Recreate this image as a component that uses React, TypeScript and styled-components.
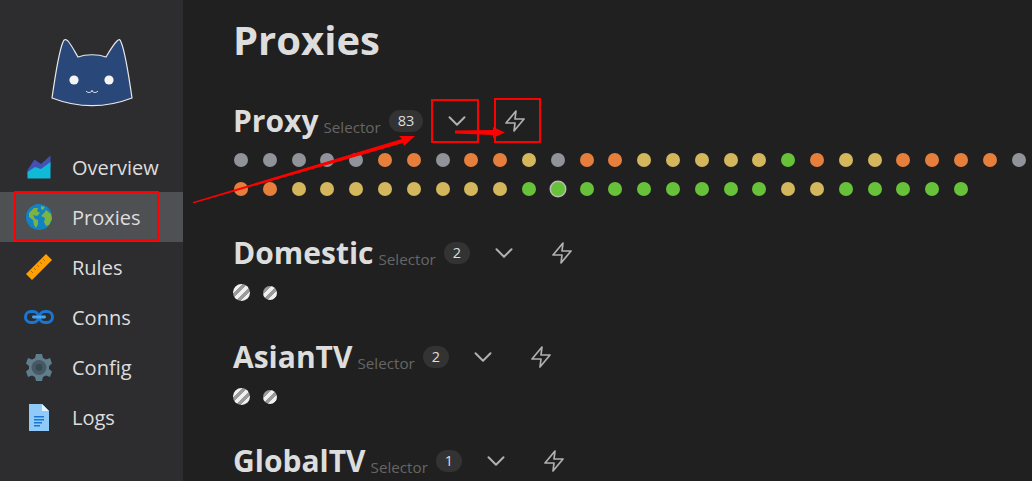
import React from "react";
import styled, { createGlobalStyle } from "styled-components";

const GlobalStyle = createGlobalStyle`
  html, body {
    margin: 0;
    padding: 0;
    height: 100%;
    overflow: hidden;
    background: #202020;
    font-family: "Open Sans", "Noto Sans", sans-serif;
  }
  #root {
    height: 100%;
  }
`;

const COLORS: Record<string, string> = {
  n: "#909399",
  o: "#e67f3c",
  y: "#d4b75c",
  g: "#67c23a"
};

// one letter per proxy, n = no latency yet
const proxyDots = ("nnnnnoonooynooyyyyygoyyoooon" + "ooyyyyyyyyggggggggg" + "yyggggg").split("");
const SELECTED_DOT = 39;

const navItems = [
  { name: "Overview", icon: <OverviewIcon /> },
  { name: "Proxies", icon: <GlobeIcon />, active: true },
  { name: "Rules", icon: <RulerIcon /> },
  { name: "Conns", icon: <LinkIcon /> },
  { name: "Config", icon: <GearIcon /> },
  { name: "Logs", icon: <DocIcon /> }
];

const groups = [
  { name: "Domestic", count: 2 },
  { name: "AsianTV", count: 2 },
  { name: "GlobalTV", count: 1 }
];

export default function App() {
  return (
    <Page>
      <GlobalStyle />
      <Sidebar>
        <LogoWrap>
          <CatLogo />
        </LogoWrap>
        <Nav>
          {navItems.map(({ name, icon, active }) => (
            <NavItem key={name} $active={active}>
              <NavIcon>{icon}</NavIcon>
              <span>{name}</span>
            </NavItem>
          ))}
        </Nav>
      </Sidebar>
      <Main>
        <Title>Proxies</Title>
        <Group>
          <GroupHeader name="Proxy" count={83} />
          <Dots>
            {proxyDots.map((tone, index) => (
              <Dot key={index} $color={COLORS[tone]} $selected={index === SELECTED_DOT} />
            ))}
          </Dots>
        </Group>
        {groups.map(({ name, count }) => (
          <Group key={name}>
            <GroupHeader name={name} count={count} />
            <Dots>
              <Striped $selected />
              <Striped />
            </Dots>
          </Group>
        ))}
      </Main>
      <Marks />
    </Page>
  );
}

function GroupHeader({ name, count }: { name: string; count: number }) {
  return (
    <Header>
      <GroupName>{name}</GroupName>
      <GroupType>Selector</GroupType>
      <Count>{count}</Count>
      <IconButton>
        <svg width="30" height="30" viewBox="0 0 24 24" fill="none" stroke="currentColor" strokeWidth="1.6" strokeLinecap="round" strokeLinejoin="round">
          <polyline points="6 9 12 15 18 9" />
        </svg>
      </IconButton>
      <IconButton>
        <svg width="24" height="24" viewBox="0 0 24 24" fill="none" stroke="currentColor" strokeWidth="1.7" strokeLinecap="round" strokeLinejoin="round">
          <polygon points="13 2 3 14 12 14 11 22 21 10 12 10 13 2" />
        </svg>
      </IconButton>
    </Header>
  );
}

function CatLogo() {
  return (
    <svg width="84" height="72" viewBox="0 0 84 72">
      <path
        d="M2 61 C5 40 9 14 13 5 C14 2 16 2 18 4 C22 9 25 15 28 20 C36 17 48 17 56 20 C59 15 63 8 67 4 C69 2 70 2 71 5 C75 14 79 40 82 61 C56 71 28 71 2 61 Z"
        fill="#2a477a"
        stroke="#e8e8e8"
        strokeWidth="1.2"
      />
      <circle cx="24" cy="43" r="4.6" fill="#f4f4f4" />
      <circle cx="59" cy="43" r="4.6" fill="#f4f4f4" />
      <path d="M36 54 C38 56 40 56 42 54 C44 56 46 56 48 54 M42 54 L42 53" fill="none" stroke="#f4f4f4" strokeWidth="1" />
    </svg>
  );
}

function OverviewIcon() {
  return (
    <svg width="24" height="24" viewBox="0 0 24 24">
      <path d="M0.5 15 L7.5 4.5 L14 9 L23.5 0.5 V12 L14 18 L0.5 20 Z" fill="#4351b5" />
      <path d="M0.5 17 L8 12 L14 14 L23.5 7 V23.5 H0.5 Z" fill="#0fbad6" />
    </svg>
  );
}

function GlobeIcon() {
  return (
    <svg width="26" height="26" viewBox="0 0 26 26">
      <circle cx="13" cy="13" r="13" fill="#1282c0" />
      <path d="M3 9 L8 4 L12 4 L11 7 L14 9 L11 12 L7 11 L9 15 L12 16 L12 20 L10 24 L8 21 L7 16 L3 13 Z" fill="#7cb342" />
      <path d="M15 2 L19 3 L17 6 L15 5 Z M20 6 L25 10 L26 15 L23 21 L20 22 L18 18 L19 14 L15 12 L18 9 Z" fill="#7cb342" />
    </svg>
  );
}

function RulerIcon() {
  return (
    <svg width="26" height="26" viewBox="0 0 26 26">
      <path d="M0 20 L20 0 L26 6 L6 26 Z" fill="#ff9f00" />
      <path d="M5 17 L7 19 M8 14 L10 16 M11 11 L13 13 M14 8 L16 10 M17 5 L19 7" stroke="#b26f00" strokeWidth="1" />
    </svg>
  );
}

function LinkIcon() {
  return (
    <svg width="30" height="14" viewBox="0 0 30 14">
      <rect x="1.5" y="1.5" width="13" height="11" rx="5.5" fill="none" stroke="#1976d2" strokeWidth="3" />
      <rect x="15.5" y="1.5" width="13" height="11" rx="5.5" fill="none" stroke="#1976d2" strokeWidth="3" />
      <rect x="8" y="5.6" width="14" height="2.8" rx="1.4" fill="#42a5f5" />
    </svg>
  );
}

function GearIcon() {
  return (
    <svg width="26" height="27" viewBox="0 0 26 27">
      <path
        d="M10 0 H16 L17 4 L20 5.5 L24 4 L26 9.5 L23 12 V15 L26 17.5 L24 23 L20 21.5 L17 23 L16 27 H10 L9 23 L6 21.5 L2 23 L0 17.5 L3 15 V12 L0 9.5 L2 4 L6 5.5 L9 4 Z"
        fill="#607d8b"
      />
      <circle cx="13" cy="13.5" r="7.5" fill="#455a64" />
      <circle cx="13" cy="13.5" r="3.4" fill="#37474f" />
    </svg>
  );
}

function DocIcon() {
  return (
    <svg width="20" height="27" viewBox="0 0 20 27">
      <path d="M0 0 H13 L20 7 V27 H0 Z" fill="#90caf9" />
      <path d="M13 0 L20 7 H13 Z" fill="#e1f5fe" />
      <path d="M5 12 H15 V13.5 H5 Z M5 15 H15 V16.5 H5 Z M5 18 H13 V19.5 H5 Z M5 21 H11 V22.5 H5 Z" fill="#1976d2" />
    </svg>
  );
}

// the red annotations drawn on top of the screenshot
function Marks() {
  return (
    <>
      <MarkBox $left={14} $top={191} $width={145} $height={50} />
      <MarkBox $left={431} $top={99} $width={48} $height={44} />
      <MarkBox $left={494} $top={98} $width={47} $height={45} />
      <MarkArrows width="1032" height="481" viewBox="0 0 1032 481">
        <path d="M193 202 L402 139 L399 136 L415 136 L404 146 L403 143 L193 203.5 Z" fill="#f00" />
        <path d="M455 130.5 L493 130 L493 127 L505 132.5 L493 138 L493 135 L455 133.5 Z" fill="#f00" />
      </MarkArrows>
    </>
  );
}

const Page = styled.div`
  display: flex;
  height: 100%;
  overflow: hidden;
  position: relative;
  background: #202020;
`;

const Sidebar = styled.div`
  width: 183px;
  flex-shrink: 0;
  background: #2d2d30;
`;

const LogoWrap = styled.div`
  display: flex;
  justify-content: center;
  padding: 37px 0 34px;
  height: 71px;
`;

const Nav = styled.nav`
  display: flex;
  flex-direction: column;
`;

const NavItem = styled.div<{ $active?: boolean }>`
  display: flex;
  align-items: center;
  height: 50px;
  padding-left: 24px;
  font-size: 20px;
  color: #ddd;
  background: ${props => (props.$active ? "#4f5054" : "transparent")};
`;

const NavIcon = styled.div`
  width: 30px;
  height: 30px;
  margin-right: 18px;
  display: flex;
  align-items: center;
  justify-content: center;
`;

const Main = styled.main`
  flex: 1;
  padding: 10px 0 0 51px;
  min-width: 0;
`;

const Title = styled.h1`
  margin: 0 0 33px -1px;
  font-size: 40px;
  line-height: 60px;
  font-weight: 700;
  color: #ddd;
`;

const Group = styled.section`
  margin-bottom: 39px;
`;

const Header = styled.div`
  display: flex;
  align-items: center;
  height: 36px;
`;

const GroupName = styled.h2`
  margin: 0 0 0 -1px;
  font-size: 30px;
  line-height: 36px;
  font-weight: 700;
  color: #ddd;
`;

const GroupType = styled.span`
  margin: 12px 8px 0 5px;
  font-size: 15.2px;
  color: #666;
`;

const Count = styled.span`
  height: 22px;
  padding: 0 9px;
  border-radius: 11px;
  background: #333;
  color: #ddd;
  font-size: 14.5px;
  line-height: 22px;
  text-align: center;
`;

const IconButton = styled.button`
  display: flex;
  align-items: center;
  justify-content: center;
  width: 40px;
  height: 30px;
  padding: 0;
  margin-left: 14px;
  margin-right: 4px;
  background: none;
  border: 0;
  color: #b0b0b0;
`;

const Dots = styled.div`
  display: flex;
  flex-wrap: wrap;
  align-items: center;
  width: 800px;
  margin-top: 14px;
  gap: 15px 14.8px;
`;

const Dot = styled.span<{ $color: string; $selected?: boolean }>`
  width: 14px;
  height: 14px;
  border-radius: 50%;
  background: ${props => props.$color};
  box-shadow: ${props => (props.$selected ? "0 0 0 1.5px #bbb" : "none")};
`;

const Striped = styled.span<{ $selected?: boolean }>`
  width: ${props => (props.$selected ? 17 : 14)}px;
  height: ${props => (props.$selected ? 17 : 14)}px;
  margin: ${props => (props.$selected ? -1 : 0)}px;
  margin-left: ${props => (props.$selected ? -1.5 : 0)}px;
  border-radius: 50%;
  background: repeating-linear-gradient(
    -45deg,
    #9a9a9a 0,
    #9a9a9a 3.5px,
    #f0f0f0 3.5px,
    #f0f0f0 7px
  );
`;

const MarkBox = styled.div<{ $left: number; $top: number; $width: number; $height: number }>`
  position: absolute;
  left: ${props => props.$left}px;
  top: ${props => props.$top}px;
  width: ${props => props.$width}px;
  height: ${props => props.$height}px;
  box-sizing: border-box;
  border: 2px solid #f00;
`;

const MarkArrows = styled.svg`
  position: absolute;
  left: 0;
  top: 0;
  pointer-events: none;
`;
